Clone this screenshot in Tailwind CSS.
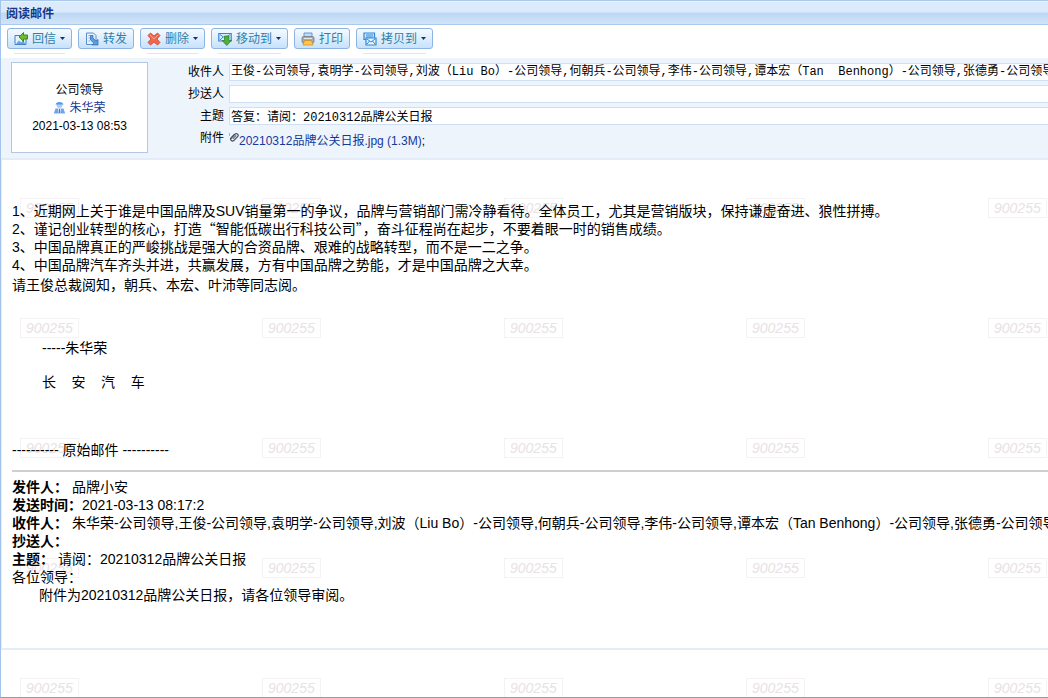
<!DOCTYPE html>
<html lang="zh-CN">
<head>
<meta charset="utf-8">
<meta name="viewport" content="width=device-width, initial-scale=1">
<title>阅读邮件</title>
<script src="https://cdn.jsdelivr.net/npm/@tailwindcss/browser@4"></script>
</head>
<body class="flex min-h-screen flex-col overflow-x-hidden border-b border-[#9a9a9a] border-l border-l-[#a3c4ec] bg-white font-['Liberation_Sans','Noto_Sans_CJK_SC',sans-serif] text-xs text-black">

<header class="flex h-[25px] items-center border-t border-b border-t-[#a9c9ec] border-b-[#a9c9ee] bg-linear-to-b from-[#dcebfb] from-45% via-[#bdd8f4] via-55% to-[#d2e4f7] px-[5px] pt-0.5 shadow-[inset_0_1px_0_#f3f0e6]">
  <h1 class="text-xs font-bold text-[#15388b]">阅读邮件</h1>
</header>

<nav class="flex h-[33px] items-start gap-1.5 px-1.5 pt-[3px] text-[#2f7fa8]" aria-label="邮件操作">
  <button type="button" class="relative flex h-[21px] items-center rounded-[3px] border border-[#8fb3e2] bg-linear-to-b from-[#f6faff] to-[#c6e2fb] px-1.5 leading-4 after:absolute after:top-[24px] after:right-1.5 after:left-1.5 after:h-px after:bg-[#e9e5df]">
    <svg class="mr-1 size-[14px]" viewBox="0 0 14 14" aria-hidden="true"><path d="M1 3.500h11v9H1z" fill="#dff1ff" stroke="#4a7fc0"/><path d="M2 12l3-3.500 2 2 2-2 2.500 3.500z" fill="#5aa6e6"/><path d="M5 5l4.500-4.500V3h4v4h-4v2.500z" fill="#6bbd2d" stroke="#3b7d14" stroke-width=".9"/></svg>
    <span>回信</span>
    <svg class="ml-1 h-[3px] w-[5px]" viewBox="0 0 5 3" aria-hidden="true"><path d="M0 0h5L2.500 3z" fill="#15317e"/></svg>
  </button>
  <button type="button" class="flex h-[21px] items-center rounded-[3px] border border-[#8fb3e2] bg-linear-to-b from-[#f6faff] to-[#c6e2fb] px-1.5 leading-4">
    <svg class="mr-1 size-[14px]" viewBox="0 0 14 14" aria-hidden="true"><path d="M1.500 1h7l2.500 2.500v9H1.500z" fill="#e3f0ff" stroke="#5a8fce"/><path d="M3.500 3.500h2M3.500 6h1.500M3.500 9h1.500" stroke="#7faee0"/><path d="M5.500 3.500h2.500v2.500l3 3L13 7.500V13H7l1.800-1.800-3.300-3.200z" fill="#5c9de2" stroke="#2b66ad" stroke-width=".7"/></svg>
    <span>转发</span>
  </button>
  <button type="button" class="relative flex h-[21px] items-center rounded-[3px] border border-[#8fb3e2] bg-linear-to-b from-[#f6faff] to-[#c6e2fb] px-1.5 leading-4 after:absolute after:top-[24px] after:right-1.5 after:left-1.5 after:h-px after:bg-[#e9e5df]">
    <svg class="mr-1 size-[14px]" viewBox="0 0 14 14" aria-hidden="true"><path d="M1 3.500L3.500 1 7 4l3.500-3L13 3.500 10 7l3 3.500-2.500 2.500L7 10l-3.500 3L1 10.500 4 7z" fill="#f0694f" stroke="#cf3a2a" stroke-width=".8"/><path d="M3 3l4 4 4-4" fill="none" stroke="#f9a58f"/></svg>
    <span>删除</span>
    <svg class="ml-1 h-[3px] w-[5px]" viewBox="0 0 5 3" aria-hidden="true"><path d="M0 0h5L2.500 3z" fill="#15317e"/></svg>
  </button>
  <button type="button" class="relative flex h-[21px] items-center rounded-[3px] border border-[#8fb3e2] bg-linear-to-b from-[#f6faff] to-[#c6e2fb] px-1.5 leading-4 after:absolute after:top-[24px] after:right-1.5 after:left-1.5 after:h-px after:bg-[#e9e5df]">
    <svg class="mr-1 size-[14px]" viewBox="0 0 14 14" aria-hidden="true"><path d="M.8 1.500h12.400v7.500H.8z" fill="#d5edff" stroke="#2f86d6" stroke-width="1.200"/><path d="M2 2.500l5 3.500 5-3.500M2 8l3-3" fill="none" stroke="#3f8fd6"/><path d="M6.500 4h4.500v4.500h2.500L8.800 13.500 4 8.500h2.500z" fill="#4fae3c" stroke="#2d7d27" stroke-width=".7"/></svg>
    <span>移动到</span>
    <svg class="ml-1 h-[3px] w-[5px]" viewBox="0 0 5 3" aria-hidden="true"><path d="M0 0h5L2.500 3z" fill="#15317e"/></svg>
  </button>
  <button type="button" class="flex h-[21px] items-center rounded-[3px] border border-[#8fb3e2] bg-linear-to-b from-[#f6faff] to-[#c6e2fb] px-1.5 leading-4">
    <svg class="mr-1 size-[14px]" viewBox="0 0 14 14" aria-hidden="true"><path d="M3 1h8v4H3z" fill="#b9dcff" stroke="#6d98c8"/><rect x="1" y="4.500" width="12" height="6.500" rx="1.500" fill="#a9a9ae" stroke="#777a85" stroke-width=".8"/><path d="M3 6.500h8" stroke="#e3e6ea"/><path d="M3.500 8.500h7L12 13H2z" fill="#ffc64a" stroke="#c98a1f" stroke-width=".7"/></svg>
    <span>打印</span>
  </button>
  <button type="button" class="relative flex h-[21px] items-center rounded-[3px] border border-[#8fb3e2] bg-linear-to-b from-[#f6faff] to-[#c6e2fb] px-1.5 leading-4 after:absolute after:top-[24px] after:right-1.5 after:left-1.5 after:h-px after:bg-[#e9e5df]">
    <svg class="mr-1 size-[14px]" viewBox="0 0 14 14" aria-hidden="true"><path d="M1 1h10.500v6.500H1z" fill="#cfe9ff" stroke="#2f86d6" stroke-width="1.200"/><path d="M3 3h7M3 5h7" stroke="#2f86d6"/><path d="M3 6h10v7H3z" fill="#eaf6ff" stroke="#2f86d6" stroke-width="1.200"/><path d="M4 7l4 3 4-3M4 12l2.500-3M12 12L9.500 9" fill="none" stroke="#2f86d6"/></svg>
    <span>拷贝到</span>
    <svg class="ml-1 h-[3px] w-[5px]" viewBox="0 0 5 3" aria-hidden="true"><path d="M0 0h5L2.500 3z" fill="#15317e"/></svg>
  </button>
</nav>

<section class="flex border-b-2 border-[#e3ecf9] bg-[#edf4fb] pt-1 pb-[5px] pl-2.5" aria-label="邮件信息">
  <div class="flex h-[91px] w-[137px] shrink-0 flex-col items-center justify-center border border-[#b3c7e1] bg-white leading-[18px]">
    <span>公司领导</span>
    <a href="#" class="flex items-center gap-[3px] text-[#15389b]">
      <svg class="size-[13px]" viewBox="0 0 13 13" aria-hidden="true"><circle cx="6.500" cy="4" r="3" fill="#a9cff7"/><path d="M2.500 3.500C3 0 10 0 10.500 3.500z" fill="#5b9ae8"/><path d="M.8 12.500L2.500 7.500h8l1.700 5z" fill="#6fa6ea"/><path d="M5 7.500h3l-.8 5H5.800z" fill="#e6f2ff"/><path d="M6.500 8v4" stroke="#3f78c4"/></svg>
      朱华荣
    </a>
    <span>2021-03-13 08:53</span>
  </div>
  <div class="mt-px grid min-w-0 flex-1 grid-cols-[76px_1fr] content-start gap-x-[5px] gap-y-1">
    <label for="to" class="text-right leading-[18px]">收件人</label>
    <textarea id="to" readonly class="h-[18px] w-full resize-none overflow-hidden border border-r-0 border-[#cfdff4] bg-white pl-px font-['Liberation_Mono','Noto_Sans_CJK_SC',monospace] text-xs leading-4 whitespace-pre">王俊-公司领导,袁明学-公司领导,刘波（Liu Bo）-公司领导,何朝兵-公司领导,李伟-公司领导,谭本宏（Tan  Benhong）-公司领导,张德勇-公司领导,叶沛-公司领导</textarea>
    <label for="cc" class="text-right leading-[18px]">抄送人</label>
    <input id="cc" type="text" readonly class="h-[18px] w-full border border-r-0 border-[#cfdff4] bg-white pl-px">
    <label for="subject" class="text-right leading-[18px]">主题</label>
    <input id="subject" type="text" readonly value="答复：请阅：20210312品牌公关日报" class="h-[18px] w-full border border-r-0 border-[#cfdff4] bg-white pl-px font-['Liberation_Mono','Noto_Sans_CJK_SC',monospace] text-xs">
    <span class="text-right leading-[18px]">附件</span>
    <div class="flex pt-[3px] leading-[18px]">
      <svg class="size-[10px]" viewBox="0 0 10 10" aria-hidden="true"><path d="M2 6.500L6 2.200a1.800 1.800 0 0 1 2.600 2.500L4.800 8.600A2 2 0 0 1 2 5.800L5.500 2.200M4 6.800L7 3.500" fill="none" stroke="#45505c" stroke-width="1.200"/><path d="M4 6.800L7 3.500" stroke="#6fa6ea"/><path d="M.5 1v3" stroke="#e8a05a"/></svg>
      <a href="#" class="text-[#15389b]">20210312品牌公关日报.jpg (1.3M)</a>;
    </div>
  </div>
</section>

<div class="relative flex-1 overflow-hidden">
  <!-- 用户编号水印 -->
  <div class="pointer-events-none absolute top-[38px] left-[19px] grid auto-rows-[120px] grid-cols-[repeat(5,242px)] items-start justify-items-start text-sm leading-[18px] text-[#e8e2e5] italic select-none" aria-hidden="true" id="marks"></div>

  <main class="relative h-[490px] border-b-2 border-l border-[#e3ecf9] pt-[42px] pl-2.5 text-sm leading-[18px] whitespace-nowrap">
    <p>1、近期网上关于谁是中国品牌及SUV销量第一的争议，品牌与营销部门需冷静看待。全体员工，尤其是营销版块，保持谦虚奋进、狼性拼搏。</p>
    <p>2、谨记创业转型的核心，打造<span class="font-['Noto_Sans_CJK_SC',sans-serif] leading-none">“</span>智能低碳出行科技公司<span class="font-['Noto_Sans_CJK_SC',sans-serif] leading-none">”</span>，奋斗征程尚在起步，不要着眼一时的销售成绩。</p>
    <p>3、中国品牌真正的严峻挑战是强大的合资品牌、艰难的战略转型，而不是一二之争。</p>
    <p>4、中国品牌汽车齐头并进，共赢发展，方有中国品牌之势能，才是中国品牌之大幸。</p>
    <p class="mt-0.5">请王俊总裁阅知，朝兵、本宏、叶沛等同志阅。</p>
    <p class="mt-[45px] pl-[30px]">-----朱华荣</p>
    <p class="mt-4 pl-[30px]">长&nbsp;&nbsp;&nbsp;&nbsp;安&nbsp;&nbsp;&nbsp;&nbsp;汽&nbsp;&nbsp;&nbsp;&nbsp;车</p>
    <p class="mt-[50px]">---------- 原始邮件 ----------</p>
    <hr class="mt-[11px] mb-1.5 border-t-2 border-[#cfcfcf]">
    <p><b>发件人：</b> 品牌小安</p>
    <p><b>发送时间：</b>2021-03-13 08:17:2</p>
    <p><b>收件人：</b> 朱华荣-公司领导,王俊-公司领导,袁明学-公司领导,刘波（Liu Bo）-公司领导,何朝兵-公司领导,李伟-公司领导,谭本宏（Tan Benhong）-公司领导,张德勇-公司领导,叶沛-公司领导</p>
    <p><b>抄送人：</b></p>
    <p><b>主题：</b> 请阅：20210312品牌公关日报</p>
    <p>各位领导：</p>
    <p class="pl-[27px]">附件为20210312品牌公关日报，请各位领导审阅。</p>
  </main>
</div>

<script>
  const marks = document.getElementById('marks');
  for (let i = 0; i < 25; i++) {
    const mark = document.createElement('span');
    mark.className = 'border border-[#f5f2f4] px-[5px]';
    mark.textContent = '900255';
    marks.append(mark);
  }
</script>
</body>
</html>
